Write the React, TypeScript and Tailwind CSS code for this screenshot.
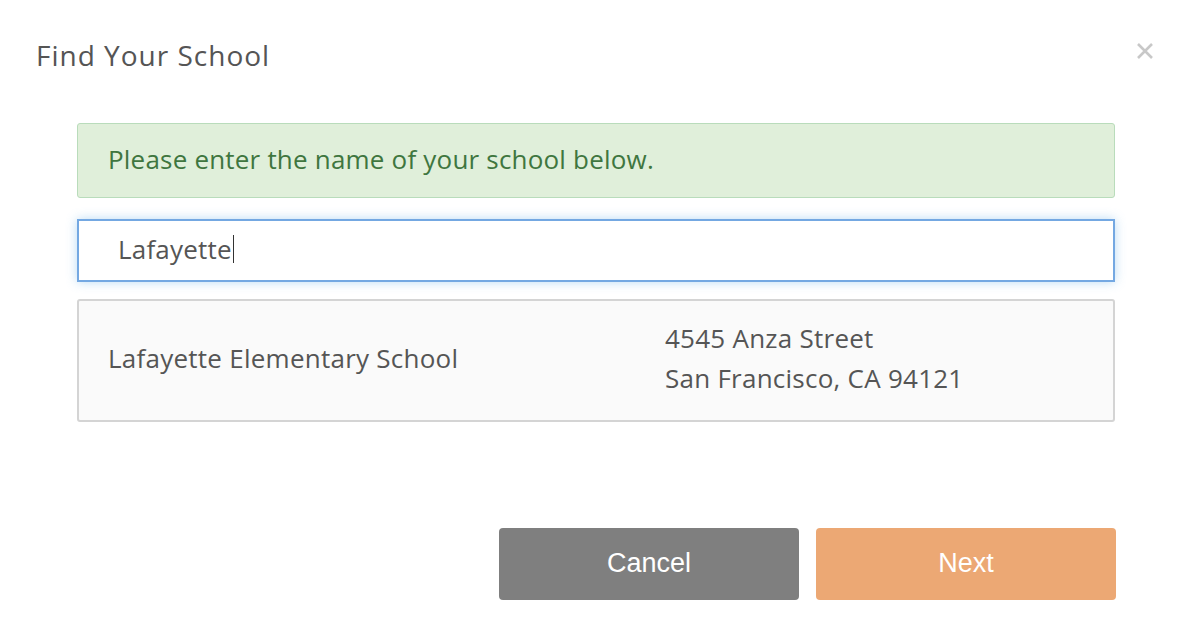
import React from "react";

export default function App() {
  const font = { fontFamily: '"Open Sans", sans-serif' };
  return (
    <div className="w-[1196px] h-[630px] bg-white relative" style={font}>
      <div className="flex items-start justify-between pl-[36px] pr-[42px] pt-[37px]">
        <h1 className="text-[28px] leading-[36px] tracking-[1px] text-[#555555] font-normal">Find Your School</h1>
        <button className="mt-[5px]">
          <svg width="18" height="18" viewBox="0 0 18 18">
            <path d="M2 2 L16 16 M16 2 L2 16" stroke="#c8c8c8" strokeWidth="2.6" />
          </svg>
        </button>
      </div>
      <div className="pl-[77px] pr-[81px] pt-[50px] flex flex-col">
        <div className="h-[75px] border border-[#b9dcbb] bg-[#e0efda] rounded-[3px] flex items-center pl-[30px] pb-[3px] text-[#3f763f] text-[26px] tracking-[0.2px]">
          Please enter the name of your school below.
        </div>
        <div className="mt-[21px] h-[63px] border-2 border-[#74a8e2] shadow-[0_0_10px_rgba(102,175,233,0.45)] flex items-center pl-[39px] pb-[3px] text-[26px] tracking-[0.2px] text-[#555555] bg-white">
          <span>Lafayette</span>
          <span className="inline-block w-[1.5px] h-[28px] bg-[#333] ml-[1px]"></span>
        </div>
        <div className="mt-[17px] h-[123px] border-2 border-[#d4d4d4] rounded-[3px] bg-[#fafafa] flex items-center pb-[5px] text-[26px] tracking-[0.25px] text-[#555555]">
          <div className="w-[586px] pl-[29px]">Lafayette Elementary School</div>
          <div className="leading-[40px]">
            <div>4545 Anza Street</div>
            <div>San Francisco, CA 94121</div>
          </div>
        </div>
      </div>
      <div className="flex justify-end gap-[17px] pr-[80px] mt-[106px]">
        <button
          className="w-[300px] h-[72px] rounded-[4px] bg-[#7f7f7f] text-white text-[27px] pb-[2px]"
          style={{ fontFamily: '"Liberation Sans", Arial, sans-serif' }}
        >
          Cancel
        </button>
        <button
          className="w-[300px] h-[72px] rounded-[4px] bg-[#eca874] text-white text-[27px] pb-[2px]"
          style={{ fontFamily: '"Liberation Sans", Arial, sans-serif' }}
        >
          Next
        </button>
      </div>
    </div>
  );
}
